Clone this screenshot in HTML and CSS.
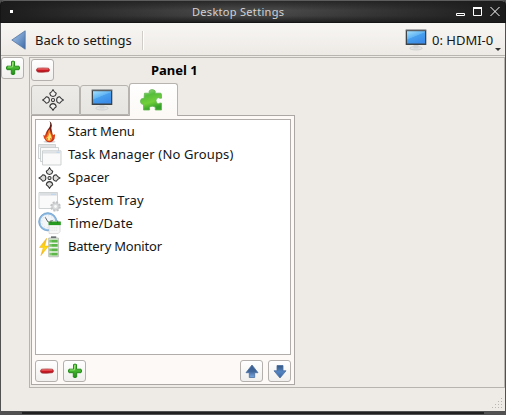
FILE: index.html
```html
<!DOCTYPE html>
<html lang="en">
<head>
<meta charset="utf-8">
<title>Desktop Settings</title>
<link rel="stylesheet" href="styles.css">
</head>
<body>
<svg class="defs" width="0" height="0" aria-hidden="true">
  <defs>
    <linearGradient id="green" x2="0" y2="1"><stop offset="0" stop-color="#7ee05c"/><stop offset=".5" stop-color="#43b52c"/><stop offset="1" stop-color="#228c18"/></linearGradient>
    <linearGradient id="leaf" x2=".3" y2="1"><stop offset="0" stop-color="#a9e094"/><stop offset=".35" stop-color="#55bd3c"/><stop offset=".7" stop-color="#72d03a"/><stop offset="1" stop-color="#36a22a"/></linearGradient>
    <linearGradient id="red" x2="0" y2="1"><stop offset="0" stop-color="#e86060"/><stop offset=".5" stop-color="#d01822"/><stop offset="1" stop-color="#a80c18"/></linearGradient>
    <linearGradient id="blue" x2="0" y2="1"><stop offset="0" stop-color="#3a5f92"/><stop offset=".5" stop-color="#3e6499"/><stop offset="1" stop-color="#78a8e4"/></linearGradient>
    <linearGradient id="blueDown" x2="0" y2="1"><stop offset="0" stop-color="#35567f"/><stop offset=".5" stop-color="#5284c2"/><stop offset="1" stop-color="#3a64a0"/></linearGradient>
    <linearGradient id="back" x2="1" y2="1"><stop offset="0" stop-color="#a9c4e6"/><stop offset=".5" stop-color="#769dcc"/><stop offset="1" stop-color="#3c68a6"/></linearGradient>
    <linearGradient id="screen" x2=".6" y2="1"><stop offset="0" stop-color="#a5e0fc"/><stop offset=".48" stop-color="#62b6f5"/><stop offset=".52" stop-color="#48a0ee"/><stop offset="1" stop-color="#3c8ce8"/></linearGradient>
    <linearGradient id="flame" x2="0" y2="1"><stop offset="0" stop-color="#30100a"/><stop offset=".4" stop-color="#7e1d10"/><stop offset=".7" stop-color="#e0481a"/><stop offset="1" stop-color="#c0281c"/></linearGradient>
    <linearGradient id="gold" x2="0" y2="1"><stop offset="0" stop-color="#f8b01c"/><stop offset=".6" stop-color="#ffe010"/><stop offset="1" stop-color="#f0a020"/></linearGradient>
    <symbol id="plus" viewBox="0 0 16 16"><path d="M6.500 1.500Q8 .7 9.500 1.500V6.200H14Q15.300 8 14 9.700H9.700V14Q8 15.300 6.300 14V9.700H2Q.7 8 2 6.200H6.500Z" fill="url(#green)" stroke="#258b1c"/><path d="M7.500 2.500v4.500h-4.500" fill="none" stroke="#9cea7b" opacity=".8"/></symbol>
    <symbol id="minus" viewBox="0 0 16 16"><path d="M2.500 6.200Q8 5.800 13.500 6.200Q15.500 8 13.500 9.700Q8 10.500 2.500 10Q.3 8 2.500 6.200Z" fill="url(#red)" stroke="#a8383c" stroke-width=".8"/><path d="M2.500 7h10.500" stroke="#ee7474" stroke-width=".8"/></symbol>
    <symbol id="up" viewBox="0 0 16 16"><path d="M8 2L14 9.700H10.700V14.500H5.300V9.700H2Z" fill="url(#blue)" stroke="#4a6f9f" stroke-width=".8"/></symbol>
    <symbol id="down" viewBox="0 0 16 16"><path d="M8 15L14 7.800H11V2.500H5V7.800H2Z" fill="url(#blueDown)" stroke="#4a6f9f" stroke-width=".8"/></symbol>
    <symbol id="monitor" viewBox="0 0 22 22"><ellipse cx="11" cy="19.200" rx="6.300" ry="1.800" fill="#e2e2e2" stroke="#c4c4c4" stroke-width=".6"/><path d="M8.500 16h5v3.500h-5z" fill="#d4d4d4"/><path d="M.7 .7h20.600v15.300H.7z" fill="#3e4347"/><path d="M.7 1h20.600" stroke="#8b9094" stroke-width=".8"/><path d="M2 2.200h18v12.300H2z" fill="url(#screen)"/></symbol>
    <symbol id="move" viewBox="0 0 22 22"><g stroke="#383838" stroke-width="1.050"><g id="petal"><path d="M11 .6Q12 2.900 14.200 4.300Q13.900 7.400 11 7.400Q8.100 7.400 7.800 4.300Q10 2.900 11 .6Z"/></g><use href="#petal" transform="rotate(90 11 11)"/><use href="#petal" transform="rotate(180 11 11)"/><use href="#petal" transform="rotate(270 11 11)"/><circle cx="11" cy="11" r="1.600"/></g></symbol>
    <symbol id="puzzle" viewBox="0 0 22 22"><path d="M4.500 4.200H9.400Q8.200 1 12 .6Q16.400 1 15 4.200H20.800Q21.800 4.200 21.500 9.200Q19.500 9.500 18.700 8.700Q15.800 8.600 16 11.700Q16 14.800 18.700 14.700Q20 13.500 21.500 14.200V21H15.300Q14.800 20 15.500 19Q15 17.200 12.200 17.200Q9.500 17.200 9.300 19Q10 20 9.500 21H3.500V15.200Q.5 15.800 .5 11.800Q.6 8.900 4 9.500Z" fill="url(#leaf)" stroke="#62b650" stroke-width=".8"/></symbol>
    <symbol id="fire" viewBox="0 0 22 22"><ellipse cx="11.500" cy="20.800" rx="6" ry="1" fill="#aaa" opacity=".5"/><path d="M11.500 0Q15 2.500 13.300 7Q13.800 9.800 14.600 13Q15.200 14.800 17 13Q17.500 17.500 15 20Q11.500 22.500 8 20Q5.500 18 5.200 13.800Q7 15.500 7.300 13.500Q8.300 10 10 8.200Q13.600 4.500 11.500 0Z" fill="url(#flame)"/><path d="M11.500 8Q12.500 12 14 15.500Q14.500 20.200 11.200 20.200Q7.500 20.200 7.300 16.500Q9 16 9.400 13.500Q9.500 10 11.500 8Z" fill="#f47a28"/><path d="M11.300 11.500Q13.600 14.500 13.500 17Q13 19.500 11 19.500Q8.500 19 8.500 17Q10.800 16 11.300 11.500Z" fill="#ffe070"/><path d="M9.500 17v1.800M12.500 17v1.800" stroke="#c86012" stroke-width=".7"/></symbol>
    <symbol id="windows" viewBox="0 0 24 22"><g fill="#fafafa" stroke="#c3c6c8" stroke-width=".8"><path d="M.5.5h17v14h-17z"/><path d="M1 1h16v2h-16z" fill="#e0e2e4" stroke="none"/><path d="M2.500 3.500h18v14h-18z"/><path d="M4.500 6.800h18.500v14.200H4.500z"/></g><path d="M5 7.200h17.600v2.300H5z" fill="#dee1e4"/><path d="M18.500 8.200h3" stroke="#b8d4ee"/></symbol>
    <symbol id="tray" viewBox="0 0 24 22"><path d="M1 2.500h18.500v16H1z" fill="#fafafa" stroke="#c3c6c8" stroke-width=".8"/><path d="M1.500 3h17.600v2.700H1.500z" fill="#dcdfe2"/><path d="M13 4.300h5" stroke="#b8d4ee"/><circle cx="17.500" cy="16.500" r="4" fill="#dedfe0" stroke="#c0c2c3" stroke-width="2.500" stroke-dasharray="1.900 1.240"/><circle cx="17.500" cy="16.500" r="3.500" fill="#d8dadb" stroke="#c3c5c7" stroke-width=".7"/><circle cx="17.500" cy="16.500" r="1.400" fill="#fafafa"/></symbol>
    <symbol id="clock" viewBox="0 0 24 24"><circle cx="9.700" cy="10.200" r="8.700" fill="#f3f6f9" stroke="#8dbbe2" stroke-width="2"/><circle cx="9.700" cy="10.200" r="9.500" fill="none" stroke="#5a90c4" stroke-width=".6"/><circle cx="9.700" cy="10.200" r="6.300" fill="none" stroke="#b7bec4" stroke-width=".8" stroke-dasharray=".8 2.500"/><path d="M7 5.500l3 5 5-1.500" fill="none" stroke="#5a6067" stroke-width="1"/><path d="M11 10h11.500v10.500l-2 2H11z" fill="#f7f7f7" stroke="#ccc" stroke-width=".7"/><path d="M10.500 10h12.800v3.700H10.500z" fill="#279b20"/><path d="M13 8.800v2.500M20 8.800v2.500" stroke="#3a5a38" stroke-width=".8"/><path d="M12.500 16.500h8M12.500 19h7" stroke="#ddd" stroke-dasharray="1 1"/></symbol>
    <symbol id="battery" viewBox="0 0 24 24"><path d="M13 1.500h5.500v2.500h-5.500z" fill="#51565a"/><path d="M10.700 3.200h10v19.500h-10z" fill="#eaf3e6" stroke="#a3aba0" stroke-width=".8"/><path d="M11.500 6.300h8.500M11.500 10.900h8.500M11.500 15.500h8.500M11.500 20h8.500" stroke="#5cb648" stroke-width="2.800"/><path d="M13 5v17" stroke="#fff" opacity=".4"/><path d="M8.500 3.500L1 13h4L2.500 21.500L10.500 11.500H6.500Z" fill="url(#gold)" stroke="#edaa18" stroke-width=".5"/></symbol>
  </defs>
</svg>
<div class="window">
  <header class="titlebar">
    <span class="menu-dot"></span>
    <span class="title">Desktop Settings</span>
    <svg class="window-controls" width="44" height="11" viewBox="0 0 44 11" fill="none" stroke="#fff"><path d="M.5 7.500h8v2h-8z"/><path d="M17.500 1.500h8v8h-8z"/><path d="M17 2h9" stroke-width="2"/><path d="M34.500 1l9 9M43.500 1l-9 9"/></svg>
  </header>
  <nav class="toolbar">
    <svg class="back-icon" width="15" height="20" viewBox="0 0 15 20"><path d="M.8 10L14.200.8V19.200Z" fill="url(#back)" stroke="#5577a4" stroke-width=".8"/></svg>
    <span class="back-label">Back to settings</span>
    <i class="separator"></i>
    <div class="screen-select">
      <svg width="22" height="22"><use href="#monitor"/></svg>
      <span>0: HDMI-0</span>
      <i class="caret"></i>
    </div>
  </nav>
  <main class="content">
    <aside><button class="btn"><svg width="16" height="16"><use href="#plus"/></svg></button></aside>
    <section class="frame">
      <div class="panel">
        <div class="panel-head">
          <button class="btn"><svg width="16" height="16"><use href="#minus"/></svg></button>
          <h1>Panel 1</h1>
        </div>
        <div class="tabs">
          <div class="tab"><svg class="hollow" width="22" height="22"><use href="#move"/></svg></div>
          <div class="tab"><svg width="22" height="22"><use href="#monitor"/></svg></div>
          <div class="tab active"><svg width="22" height="22"><use href="#puzzle"/></svg></div>
        </div>
        <div class="pane">
          <ul class="list">
            <li><svg width="24" height="22"><use href="#fire" width="22"/></svg><span class="tight">Start Menu</span></li>
            <li><svg width="24" height="22"><use href="#windows"/></svg><span class="wide">Task Manager (No Groups)</span></li>
            <li><svg class="filled" width="24" height="22"><use href="#move" width="23"/></svg><span>Spacer</span></li>
            <li><svg width="24" height="22"><use href="#tray"/></svg><span class="wider">System Tray</span></li>
            <li><svg width="24" height="23"><use href="#clock"/></svg><span class="wide">Time/Date</span></li>
            <li><svg width="24" height="23"><use href="#battery"/></svg><span class="tighter">Battery Monitor</span></li>
          </ul>
          <div class="actions">
            <button class="btn"><svg width="16" height="16"><use href="#minus"/></svg></button>
            <button class="btn"><svg width="16" height="16"><use href="#plus"/></svg></button>
            <button class="btn push"><svg width="16" height="16"><use href="#up"/></svg></button>
            <button class="btn"><svg width="16" height="16"><use href="#down"/></svg></button>
          </div>
        </div>
      </div>
    </section>
  </main>
  <footer class="status">
    <svg width="11" height="11" fill="#b9b5b0"><path d="M9 0h1v1h-1zM6 3h1v1h-1zM9 3h1v1h-1zM3 6h1v1h-1zM6 6h1v1h-1zM9 6h1v1h-1zM0 9h1v1h-1zM3 9h1v1h-1zM6 9h1v1h-1zM9 9h1v1h-1z"/></svg>
  </footer>
  <div class="window-edge"><i></i></div>
</div>
</body>
</html>
```
FILE: styles.css
```css
* { box-sizing: border-box; }
body { margin: 0; font: 13px/18px "Noto Sans", sans-serif; color: #151515; background: #303030; }
.defs { position: absolute; }
svg { display: block; flex: none; }
.window { width: 506px; height: 415px; display: flex; flex-direction: column; padding: 0 1px; background: #515151; overflow: hidden; }
.titlebar { height: 23px; flex: none; margin: 0 -1px; padding: 0 7px 0 10px; display: flex; align-items: center; border: 1px solid #151515; border-top-color: #5d5d5d; border-radius: 5px 5px 0 0; background: linear-gradient(90deg, #1c1c1c 0, transparent 45%, transparent 55%, #1c1c1c), linear-gradient(#292929, #4a4a4a 45%, #454545 70%, #202020); }
.menu-dot { width: 3px; height: 3px; margin-left: -1px; background: #fff; }
.title { width: 94px; margin-left: 179px; color: #d2d2d2; font-size: 11px; letter-spacing: .3px; white-space: nowrap; }
.window-controls { margin-left: auto; margin-right: -2px; }
.toolbar { height: 33px; flex: none; display: flex; align-items: center; padding: 2px 0 0 10px; background: linear-gradient(#f8f6f3, #edeae6); border-bottom: 1px solid #b8b4b0; }
.back-label { width: 98px; margin-left: 9px; white-space: nowrap; }
.separator { width: 2px; height: 19px; margin-left: 9px; background: linear-gradient(90deg, #d0ccc8 50%, #fff 50%); }
.screen-select { position: relative; display: flex; align-items: center; gap: 5px; width: 100px; margin-left: auto; }
.caret { position: absolute; right: 4px; bottom: 0; border: 3px solid transparent; border-top-color: #333; border-bottom: 0; }
.content { height: 332px; flex: none; display: flex; padding-top: 1px; background: #eeebe7; }
aside { width: 28px; }
.frame { width: 476px; border: 1px solid #b7b4b0; padding: 1px; }
.btn { width: 23px; height: 22px; padding: 0; display: flex; align-items: center; justify-content: center; border: 1px solid #b3b0ad; border-radius: 3px; background: linear-gradient(#fff, #f0efed); }
.panel { width: 264px; }
.panel-head { display: flex; height: 24px; }
h1 { margin: 2px 0 0; padding-left: 97px; font-size: 13px; line-height: 18px; color: #000; }
.tabs { display: flex; align-items: flex-end; height: 33px; margin-bottom: -1px; position: relative; }
.tab { width: 49px; height: 30px; margin-bottom: 1px; display: flex; align-items: center; justify-content: center; padding-right: 5px; border: 1px solid #b7b4b0; border-radius: 3px 3px 0 0; background: linear-gradient(#ecebe8, #e7e5e2); }
.tab.active { height: 33px; margin-bottom: 0; border-bottom: 0; background: linear-gradient(#fff, #fcf9f6); }
.hollow { fill: #f2f1ef; }
.filled { fill: #dededc; }
.pane { height: 270px; padding: 3px; border: 1px solid #aaa7a4; background: #fcf9f6; }
.list { height: 236px; width: 256px; margin: 0 0 5px; padding: 0 2px; list-style: none; border: 1px solid #b0adaa; background: #fff; }
.list li { display: flex; align-items: center; height: 23px; gap: 6px; white-space: nowrap; }
.list span { padding-bottom: 2px; }
.list .tight { letter-spacing: -.1px; }
.list .tighter { letter-spacing: -.2px; }
.list .wide { letter-spacing: .14px; }
.list .wider { letter-spacing: .25px; }
.actions { display: flex; gap: 5px; }
.push { margin-left: auto; }
.status { height: 23px; flex: none; display: flex; justify-content: flex-end; align-items: flex-end; padding: 0 2px 2px 0; background: #eeebe7; }
.window-edge { height: 4px; flex: none; margin: 0 -1px; padding: 1px 22px 1px; background: #515151; }
.window-edge i { display: block; height: 2px; background: #202020; }
```
